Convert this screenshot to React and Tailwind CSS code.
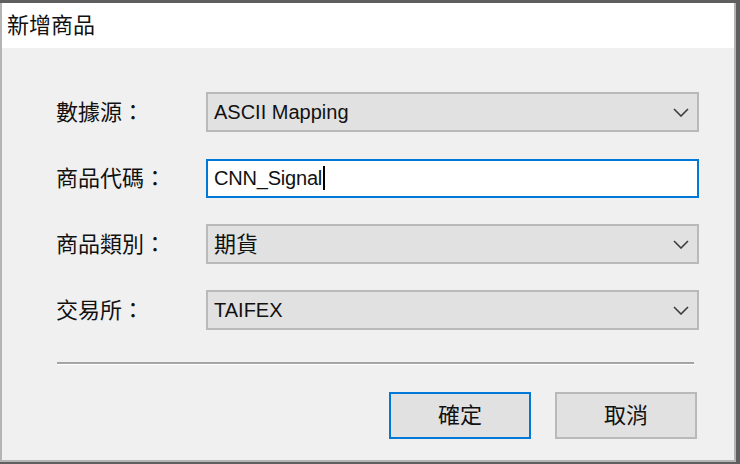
import React from "react"

const Chevron = () => (
  <svg width="16" height="9" viewBox="0 0 16 9" fill="none">
    <path d="M1 1 L8 8 L15 1" stroke="#3c3c3c" strokeWidth="1.6" />
  </svg>
)

const Combo = ({ value, cjk }) => (
  <div className="w-[493px] h-[40px] bg-[#e1e1e1] border-2 border-[#b9b9b9] flex items-center justify-between pl-[6px] pr-[8px]">
    <span className={`${cjk ? "text-[22px]" : "text-[20px]"} text-[#111]`}>{value}</span>
    <Chevron />
  </div>
)

const Row = ({ label, children }) => (
  <div className="flex items-center h-[40px]">
    <div className="w-[151px] text-[22px] text-[#111] pl-[1px]">{label}</div>
    {children}
  </div>
)

const App = () => {
  return (
    <div
      className="w-[740px] h-[464px] bg-[#5f5f5f] pt-[3px] overflow-hidden"
      style={{ fontFamily: '"Liberation Sans", "Noto Sans CJK TC", sans-serif' }}
    >
      <div className="w-[736px] h-[459px] bg-white border-l-2 border-r-2 border-b-2 border-[#b4b4b4] flex flex-col">
        <div className="h-[45px] flex items-center pl-[5px] text-[22px] text-[#111]">新增商品</div>
        <div className="flex-1 bg-[#f0f0f0] pl-[53px] pt-[44px] flex flex-col">
          <div className="flex flex-col gap-[26px]">
            <Row label="數據源：">
              <Combo value="ASCII Mapping" />
            </Row>
            <Row label="商品代碼：">
              <div className="w-[493px] h-[39px] bg-white border-2 border-[#0078d7] flex items-center pl-[6px]">
                <span className="text-[20px] text-[#111] tracking-[-0.2px]">CNN_Signal</span>
                <span className="w-[2px] h-[24px] bg-black ml-[1px]"></span>
              </div>
            </Row>
            <Row label="商品類別：">
              <Combo value="期貨" cjk />
            </Row>
            <Row label="交易所：">
              <Combo value="TAIFEX" />
            </Row>
          </div>
          <div className="mt-[32px] mr-[40px] ml-[2px] border-t-2 border-[#a4a4a4] border-b border-b-white"></div>
          <div className="mt-[27px] flex justify-end gap-[24px] pr-[37px]">
            <button className="w-[142px] h-[47px] bg-[#e1e1e1] border-2 border-[#0078d7] text-[22px] text-[#111]">確定</button>
            <button className="w-[142px] h-[47px] bg-[#e1e1e1] border-2 border-[#b9b9b9] text-[22px] text-[#111]">取消</button>
          </div>
        </div>
      </div>
    </div>
  )
}

export default App
